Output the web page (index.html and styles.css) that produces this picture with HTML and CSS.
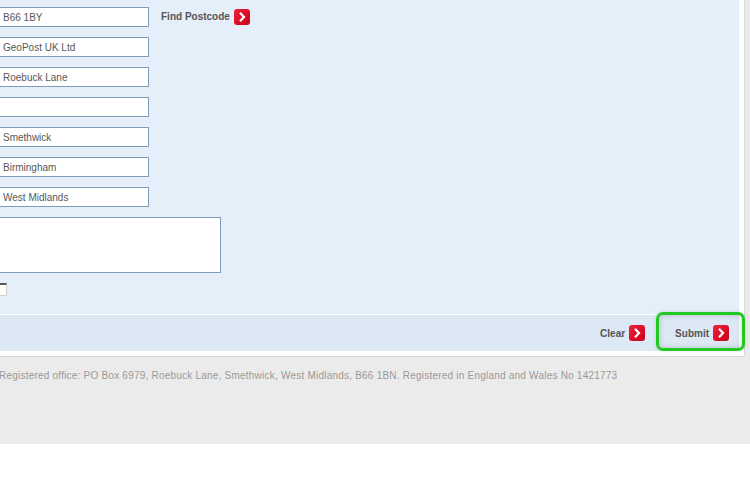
FILE: index.html
```html
<!DOCTYPE html>
<html>
<head>
<meta charset="utf-8">
<link rel="stylesheet" href="styles.css">
</head>
<body>
<div class="page">
  <div class="frame">
    <div class="panel">
      <div class="row">
        <input class="field" type="text" value="B66 1BY">
        <a class="btn find">Find Postcode
          <svg class="ico" width="16" height="16" viewBox="0 0 16 16"><defs><linearGradient id="g1" x1="0" y1="0" x2="1" y2="1"><stop offset="0" stop-color="#f0203a"/><stop offset="1" stop-color="#c9001c"/></linearGradient></defs><rect x="0" y="0" width="16" height="16" rx="3" fill="url(#g1)"/><path d="M6 3.8 L10 8 L6 12.2" fill="none" stroke="#fff" stroke-width="2.2"/></svg>
        </a>
      </div>
      <div class="row"><input class="field" type="text" value="GeoPost UK Ltd"></div>
      <div class="row"><input class="field" type="text" value="Roebuck Lane"></div>
      <div class="row"><input class="field" type="text" value=""></div>
      <div class="row"><input class="field" type="text" value="Smethwick"></div>
      <div class="row"><input class="field" type="text" value="Birmingham"></div>
      <div class="row"><input class="field" type="text" value="West Midlands"></div>
      <textarea class="notes"></textarea>
      <span class="check"></span>
    </div>
    <div class="actions">
      <a class="btn">Clear
        <svg class="ico" width="16" height="16" viewBox="0 0 16 16"><defs><linearGradient id="g2" x1="0" y1="0" x2="1" y2="1"><stop offset="0" stop-color="#f0203a"/><stop offset="1" stop-color="#c9001c"/></linearGradient></defs><rect x="0" y="0" width="16" height="16" rx="3" fill="url(#g2)"/><path d="M6 3.8 L10 8 L6 12.2" fill="none" stroke="#fff" stroke-width="2.2"/></svg>
      </a>
      <a class="btn submit"><span class="ring"></span>Submit
        <svg class="ico" width="16" height="16" viewBox="0 0 16 16"><defs><linearGradient id="g3" x1="0" y1="0" x2="1" y2="1"><stop offset="0" stop-color="#f0203a"/><stop offset="1" stop-color="#c9001c"/></linearGradient></defs><rect x="0" y="0" width="16" height="16" rx="3" fill="url(#g3)"/><path d="M6 3.8 L10 8 L6 12.2" fill="none" stroke="#fff" stroke-width="2.2"/></svg>
      </a>
    </div>
  </div>
  <p class="legal">Registered office: PO Box 6979, Roebuck Lane, Smethwick, West Midlands, B66 1BN. Registered in England and Wales No 1421773</p>
</div>
</body>
</html>
```
FILE: styles.css
```css
html, body {
  margin: 0;
  padding: 0;
  background: #ffffff;
  font-family: "Liberation Sans", Arial, sans-serif;
}
.page {
  background: #ebebeb;
  height: 444px;
  overflow: hidden;
}
.frame {
  width: 744px;
  background: #ffffff;
  border-right: 1px solid #d9d9d9;
  border-bottom: 1px solid #d9d9d9;
  padding-bottom: 5px;
  box-sizing: content-box;
}
.panel {
  width: 739px;
  height: 315px;
  background: #e5eff9;
  box-sizing: border-box;
  padding-top: 7px;
  display: flex;
  flex-direction: column;
  align-items: flex-start;
  border-bottom: 1px solid #ffffff;
}
.row {
  display: flex;
  align-items: center;
  gap: 12px;
  height: 20px;
  margin-bottom: 10px;
}
.field {
  margin: 0 0 0 -3px;
  width: 152px;
  height: 20px;
  box-sizing: border-box;
  border: 1px solid #7f9db9;
  background: #ffffff;
  padding: 0 0 0 5px;
  font-family: "Liberation Sans", Arial, sans-serif;
  font-size: 10px;
  color: #585858;
  outline: none;
}
.notes {
  margin: 0 0 0 -3px;
  width: 224px;
  height: 56px;
  box-sizing: border-box;
  border: 1px solid #7f9db9;
  background: #ffffff;
  resize: none;
  padding: 0;
  display: block;
}
.check {
  display: block;
  margin: 10px 0 0 -6px;
  width: 13px;
  height: 13px;
  box-sizing: border-box;
  background: #ffffff;
  border-top: 2px solid #5a5a5a;
  border-left: 2px solid #5a5a5a;
  border-right: 1px solid #d4d0c8;
  border-bottom: 1px solid #d4d0c8;
}
.btn {
  display: inline-flex;
  align-items: center;
  gap: 4px;
  font-size: 10px;
  font-weight: bold;
  color: #555555;
  text-decoration: none;
  position: relative;
}
.find {
  margin-top: -1px;
}
.ico {
  display: block;
}
.actions {
  width: 739px;
  height: 36px;
  background: #dce8f4;
  display: flex;
  align-items: center;
  justify-content: flex-end;
  gap: 30px;
  padding-right: 10px;
  box-sizing: border-box;
}
.ring {
  position: absolute;
  top: -13px;
  bottom: -10px;
  left: -19px;
  right: -16px;
  border: 3px solid #22c922;
  border-radius: 7px;
  box-shadow: inset 0 0 6px rgba(0, 0, 0, 0.18), 0 0 4px rgba(0, 0, 0, 0.12);
}
.legal {
  margin: 13px 0 0 -1px;
  font-size: 10px;
  letter-spacing: 0.22px;
  color: #999999;
  white-space: nowrap;
}
```
